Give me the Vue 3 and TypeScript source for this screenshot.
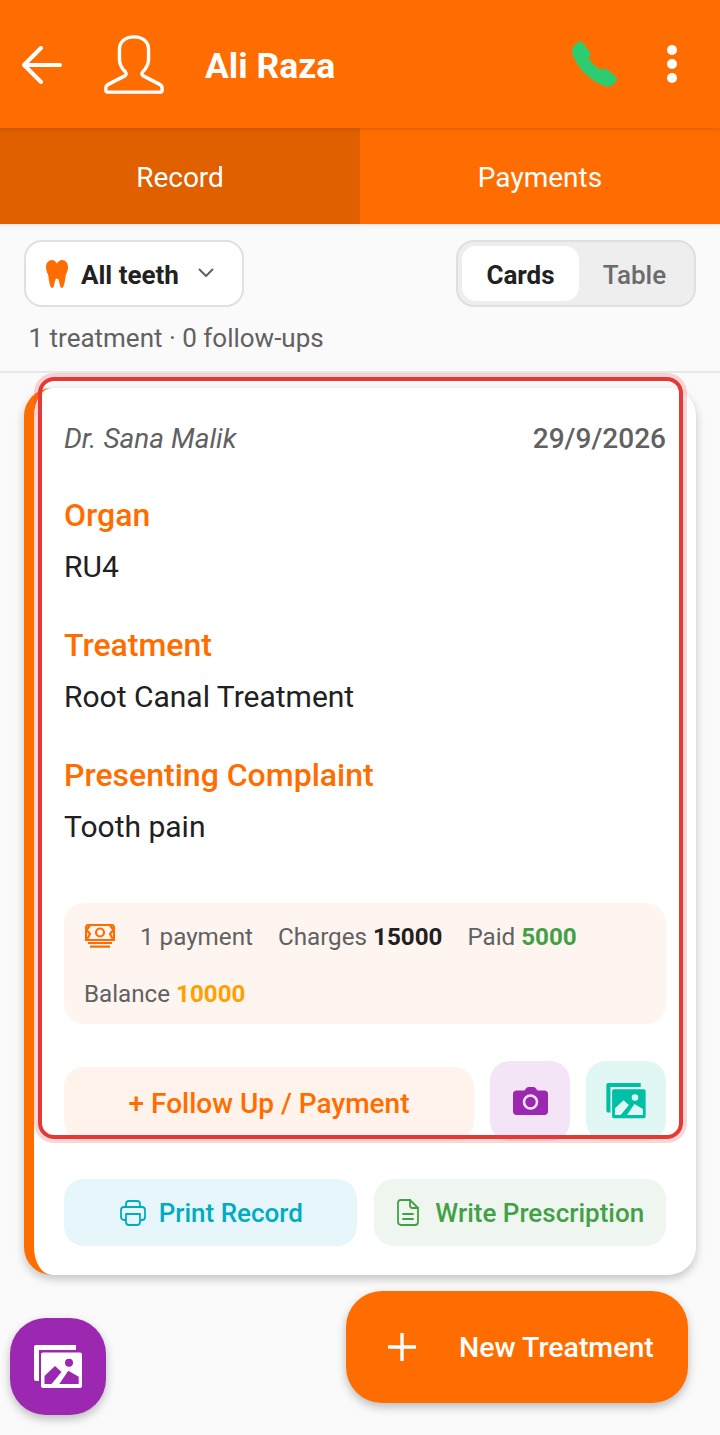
<template>
  <div class="page">
    <header class="header">
      <svg class="back" viewBox="0 0 40 38" fill="none" stroke="#fff" stroke-width="4" stroke-linecap="round" stroke-linejoin="round">
        <path d="M38 19H2M19 2 2 19l17 17" />
      </svg>
      <svg class="avatar" viewBox="0 0 68 68" fill="none" stroke="#fff" stroke-width="3.5" stroke-linejoin="round">
        <path d="M34 6C43 6 49 11 49 19V29C49 35 46 39 43 42C41.5 44 42 45.5 44 46.5L60.5 55C62.5 56 63 57 63 59V61C63 62.5 62 63 60.5 63H7.5C6 63 5 62.5 5 61V59C5 57 5.500 56 7.500 55L24 46.500C26 45.500 26.500 44 25 42C22 39 19 35 19 29V19C19 11 25 6 34 6Z" />
      </svg>
      <span class="name">{{ patient }}</span>
      <svg class="phone" viewBox="0 0 50 50" fill="#2ecc71">
        <path d="M8 2C10 1 12 2 13 3L20 12C21 14 20 16 18.500 18C21 23 26 27 31 30C33 28.500 35 28 36.500 29L45.500 36C47.500 38 47 41 45 43C43 45.500 40 47 37 46.500C22 43 7 28 2.500 14C1 10 4 4 8 2Z" />
      </svg>
      <div class="dots"><span></span><span></span><span></span></div>
    </header>

    <nav class="tabs">
      <div class="tab active">Record</div>
      <div class="tab">Payments</div>
    </nav>

    <section class="toolbar">
      <div class="filter">
        <svg class="tooth" viewBox="0 0 22 28" fill="#ff6d00">
          <path d="M6 0C2.500 0 0 3 0 7C0 10 1.200 12.500 2 14.500C2.800 17 3.300 28 6.200 28C9.200 28 7.800 18.500 11 18.500S12.800 28 15.800 28C18.700 28 19.200 17 20 14.500C20.800 12.500 22 10 22 7C22 3 19.500 0 16 0C13.800 0 12.500 1.500 11 3.500C9.500 1.500 8.200 0 6 0Z" />
        </svg>
        <span class="filter-label">All teeth</span>
        <svg class="chevron" viewBox="0 0 16 10" fill="none" stroke="#616161" stroke-width="2" stroke-linecap="round" stroke-linejoin="round">
          <path d="M1.500 1.500 8 8l6.500-6.500" />
        </svg>
      </div>
      <div class="segment">
        <div class="seg-item selected">Cards</div>
        <div class="seg-item">Table</div>
      </div>
    </section>
    <p class="count">1 treatment · 0 follow-ups</p>
    <div class="divider"></div>

    <article class="card">
      <div class="card-top">
        <span class="doctor">Dr. Sana Malik</span>
        <span class="date">29/9/2026</span>
      </div>

      <div v-for="f in fields" :key="f.label" class="field">
        <div class="field-label">{{ f.label }}</div>
        <div class="field-value">{{ f.value }}</div>
      </div>

      <div class="summary">
        <svg class="money" viewBox="0 0 30 24" fill="none" stroke="#ff6d00" stroke-width="2.200">
          <path d="M1 3.500A2.500 2.500 0 0 1 3.500 1H26.500A2.500 2.500 0 0 1 29 3.500V16H1Z" />
          <circle cx="15" cy="8.500" r="4" />
          <path d="M5 1.500 1.500 6 5 10l-3 5.500M25 1.500 28.500 6 25 10l3 5.500M3 19H27M5 22.700H25" />
        </svg>
        <span class="pay-count">1 payment</span>
        <span class="stat">Charges <b class="dark">15000</b></span>
        <span class="stat">Paid <b class="green">5000</b></span>
        <span class="stat balance">Balance <b class="amber">10000</b></span>
      </div>

      <div class="actions">
        <button class="follow">+ Follow Up / Payment</button>
        <button class="square camera">
          <svg viewBox="0 0 35 28" width="35" height="28">
            <path fill="#9c27b0" d="M11.500 3.500 13 1.500C13.700.500 14.500 0 16 0H20C21.500 0 22.300.500 23 1.500L24.500 3.500H31.500C33.500 3.500 35 5 35 7V24.500C35 26.500 33.500 28 31.500 28H3.500C1.500 28 0 26.500 0 24.500V7C0 5 1.500 3.500 3.500 3.500Z" />
            <circle cx="17.500" cy="15" r="6.500" fill="none" stroke="#f3e5f5" stroke-width="2.600" />
          </svg>
        </button>
        <button class="square gallery">
          <svg viewBox="0 0 48 44" width="40" height="36" fill="#00bfa5">
            <path d="M2 0H42V5H5V36H2A2 2 0 0 1 0 34V2A2 2 0 0 1 2 0Z" />
            <path fill-rule="evenodd" d="M9 7.500H46A2 2 0 0 1 48 9.500V41A2 2 0 0 1 46 43H9A2 2 0 0 1 7 41V9.500A2 2 0 0 1 9 7.500ZM35 13.700A4 4 0 1 0 35 21.700A4 4 0 1 0 35 13.700ZM10.500 31 21 21 27.500 27 17.500 39H10.500ZM34.300 25.700 44.700 31.700V39H25.300Z" />
          </svg>
        </button>
      </div>

      <div class="actions-bottom">
        <button class="wide print">
          <svg viewBox="0 0 26 26" width="26" height="26" fill="none" stroke="#00acc1" stroke-width="1.800" stroke-linejoin="round">
            <path d="M6 7V4A3 3 0 0 1 9 1H17A3 3 0 0 1 20 4V7" />
            <path d="M6 20H4A3 3 0 0 1 1 17V10A3 3 0 0 1 4 7H22A3 3 0 0 1 25 10V17A3 3 0 0 1 22 20H20" />
            <path d="M6 14H20V22A3 3 0 0 1 17 25H9A3 3 0 0 1 6 22Z" />
          </svg>
          Print Record
        </button>
        <button class="wide rx">
          <svg viewBox="0 0 22 27" width="22" height="27" fill="none" stroke="#43a047" stroke-width="1.800" stroke-linejoin="round" stroke-linecap="round">
            <path d="M4 1H13L21 9V23A3 3 0 0 1 18 26H4A3 3 0 0 1 1 23V4A3 3 0 0 1 4 1Z" />
            <path d="M13 1V6.500A2.500 2.500 0 0 0 15.500 9H21M6 15H16M6 20H16" />
          </svg>
          Write Prescription
        </button>
      </div>
    </article>

    <!-- highlight box drawn over the card -->
    <div class="highlight"></div>

    <button class="fab-gallery">
      <svg viewBox="0 0 48 44" width="48" height="44" fill="#fff">
        <path d="M2 0H42V5H5V36H2A2 2 0 0 1 0 34V2A2 2 0 0 1 2 0Z" />
        <path fill-rule="evenodd" d="M9 7.500H46A2 2 0 0 1 48 9.500V41A2 2 0 0 1 46 43H9A2 2 0 0 1 7 41V9.500A2 2 0 0 1 9 7.500ZM35 13.700A4 4 0 1 0 35 21.700A4 4 0 1 0 35 13.700ZM10.500 31 21 21 27.500 27 17.500 39H10.500ZM34.300 25.700 44.700 31.700V39H25.300Z" />
      </svg>
    </button>
    <button class="fab-new">
      <svg viewBox="0 0 28 28" width="28" height="28" stroke="#fff" stroke-width="3.400">
        <path d="M14 0V28M0 14H28" />
      </svg>
      <span>New Treatment</span>
    </button>
  </div>
</template>

<script setup lang="ts">
const patient = "Ali Raza";

const fields: { label: string; value: string }[] = [
  { label: "Organ", value: "RU4" },
  { label: "Treatment", value: "Root Canal Treatment" },
  { label: "Presenting Complaint", value: "Tooth pain" },
];
</script>

<style>
html,
body {
  margin: 0;
  background: #fafafa;
}
</style>

<style scoped>
.page {
  position: relative;
  width: 720px;
  height: 1435px;
  overflow: hidden;
  background: #fafafa;
  font-family: Roboto, "Liberation Sans", sans-serif;
  color: #212121;
}

button {
  font-family: inherit;
  border: none;
}

.header {
  position: relative;
  z-index: 2;
  height: 128px;
  background: #ff6d00;
  display: flex;
  align-items: center;
  box-shadow: 0 1px 4px rgba(0, 0, 0, 0.15);
}

.back {
  width: 40px;
  height: 38px;
  margin-left: 22px;
  margin-top: 1px;
}

.avatar {
  width: 66px;
  height: 66px;
  margin-left: 39px;
}

.name {
  margin-left: 38px;
  padding-top: 3px;
  font-size: 35.500px;
  font-weight: 700;
  color: #fff;
}

.phone {
  width: 50px;
  height: 50px;
  margin-left: auto;
  margin-top: 2px;
}

.dots {
  display: flex;
  flex-direction: column;
  gap: 4px;
  margin-left: 47px;
  margin-right: 43px;
}

.dots span {
  width: 10px;
  height: 10px;
  border-radius: 50%;
  background: #fff;
}

.tabs {
  display: grid;
  grid-template-columns: 1fr 1fr;
  height: 96px;
  box-shadow: 0 2px 4px rgba(0, 0, 0, 0.08);
  position: relative;
}

.tab {
  display: flex;
  align-items: center;
  justify-content: center;
  padding-top: 2px;
  background: #ff6d00;
  color: #fff;
  font-size: 28px;
}

.tab.active {
  background: #e06000;
}

.toolbar {
  display: flex;
  justify-content: space-between;
  padding: 16px 24px 0;
}

.filter {
  box-sizing: border-box;
  width: 220px;
  height: 67px;
  display: flex;
  align-items: center;
  background: #fff;
  border: 2px solid #e0e0e0;
  border-radius: 18px;
  padding-left: 20px;
}

.tooth {
  width: 22px;
  height: 28px;
}

.filter-label {
  margin-left: 13px;
  padding-top: 2px;
  font-size: 26px;
  font-weight: 700;
}

.chevron {
  width: 16px;
  height: 10px;
  margin-left: 19px;
  margin-top: -2px;
}

.segment {
  box-sizing: border-box;
  width: 240px;
  height: 67px;
  display: flex;
  padding: 4px;
  background: #eeeeee;
  border: 2px solid #e0e0e0;
  border-radius: 18px;
}

.seg-item {
  display: flex;
  align-items: center;
  justify-content: center;
  flex: 1;
  padding-top: 2px;
  font-size: 26px;
  font-weight: 500;
  color: #6b6b6b;
}

.seg-item.selected {
  flex: 0 0 117px;
  background: #fff;
  border-radius: 14px;
  font-weight: 700;
  color: #212121;
}

.count {
  margin: 16px 0 0 28.500px;
  height: 31px;
  line-height: 31px;
  font-size: 26px;
  color: #616161;
}

.divider {
  height: 2px;
  margin-top: 17px;
  background: #e8e8e8;
}

.card {
  box-sizing: border-box;
  width: 672px;
  height: 887px;
  margin: 15px 0 0 24px;
  padding: 30px 30px 0;
  background: #fff;
  border-left: 10px solid #ff6d00;
  border-radius: 28px;
  box-shadow: 0 4px 10px rgba(0, 0, 0, 0.22);
}

.card-top {
  display: flex;
  justify-content: space-between;
  align-items: center;
  height: 40px;
  margin-bottom: 38px;
  font-size: 28px;
  color: #616161;
}

.doctor {
  font-style: italic;
}

.date {
  font-weight: 500;
}

.field {
  height: 130px;
}

.field-label {
  height: 38px;
  line-height: 38px;
  font-size: 32px;
  font-weight: 500;
  color: #ff6d00;
}

.field-value {
  margin-top: 14px;
  height: 38px;
  line-height: 38px;
  font-size: 30px;
  color: #212121;
}

.summary {
  box-sizing: border-box;
  height: 121px;
  margin-top: 17px;
  padding: 17px 20px 0;
  display: flex;
  flex-wrap: wrap;
  align-items: center;
  align-content: flex-start;
  background: #fff5f0;
  border-radius: 20px;
  font-size: 24.200px;
  color: #616161;
}

.money {
  width: 30px;
  height: 24px;
  margin-top: -2px;
  margin-left: 1px;
  margin-right: 25px;
}

.summary > span {
  height: 34px;
  line-height: 34px;
}

.pay-count {
  margin-right: 25px;
}

.stat {
  margin-right: 25px;
}

.stat b {
  font-weight: 700;
}

.balance {
  margin-top: 23px;
  margin-right: 0;
}

.dark {
  color: #212121;
}

.green {
  color: #43a047;
}

.amber {
  color: #ffa000;
}

.actions {
  display: flex;
  align-items: flex-end;
  gap: 16px;
  margin-top: 37px;
}

.follow {
  width: 410px;
  height: 74px;
  padding: 0 0 2px;
  border-radius: 20px;
  background: #fff3eb;
  color: #ff6d00;
  font-size: 28px;
  font-weight: 500;
}

.square {
  width: 80px;
  height: 80px;
  border-radius: 20px;
  display: flex;
  align-items: center;
  justify-content: center;
  padding: 0;
}

.camera {
  background: #f3e5f5;
}

.gallery {
  background: #e0f7f3;
}

.actions-bottom {
  display: flex;
  gap: 17px;
  margin-top: 38px;
}

.wide {
  flex: 1;
  height: 67px;
  border-radius: 20px;
  display: flex;
  align-items: center;
  justify-content: center;
  gap: 13px;
  font-size: 26px;
  font-weight: 500;
  padding: 0 0 0 2px;
}

.print {
  background: #e6f6fa;
  color: #00acc1;
}

.rx {
  gap: 16px;
  background: #eef6ef;
  color: #43a047;
}

.highlight {
  position: absolute;
  box-sizing: border-box;
  left: 38px;
  top: 377px;
  width: 645px;
  height: 762px;
  border: 4px solid #e53935;
  border-radius: 16px;
  box-shadow: 0 0 0 4px rgba(229, 57, 53, 0.2);
  pointer-events: none;
}

.fab-gallery {
  position: absolute;
  left: 10px;
  top: 1318px;
  width: 96px;
  height: 97px;
  border-radius: 36px;
  background: #9c27b0;
  display: flex;
  align-items: center;
  justify-content: center;
  padding: 0;
  box-shadow: 0 4px 10px rgba(0, 0, 0, 0.25);
}

.fab-new {
  position: absolute;
  left: 346px;
  top: 1291px;
  width: 342px;
  height: 112px;
  border-radius: 36px;
  background: #ff6d00;
  color: #fff;
  display: flex;
  align-items: center;
  padding: 0 0 0 42px;
  gap: 43px;
  font-size: 28.500px;
  font-weight: 500;
  box-shadow: 0 4px 10px rgba(0, 0, 0, 0.25);
}
</style>
